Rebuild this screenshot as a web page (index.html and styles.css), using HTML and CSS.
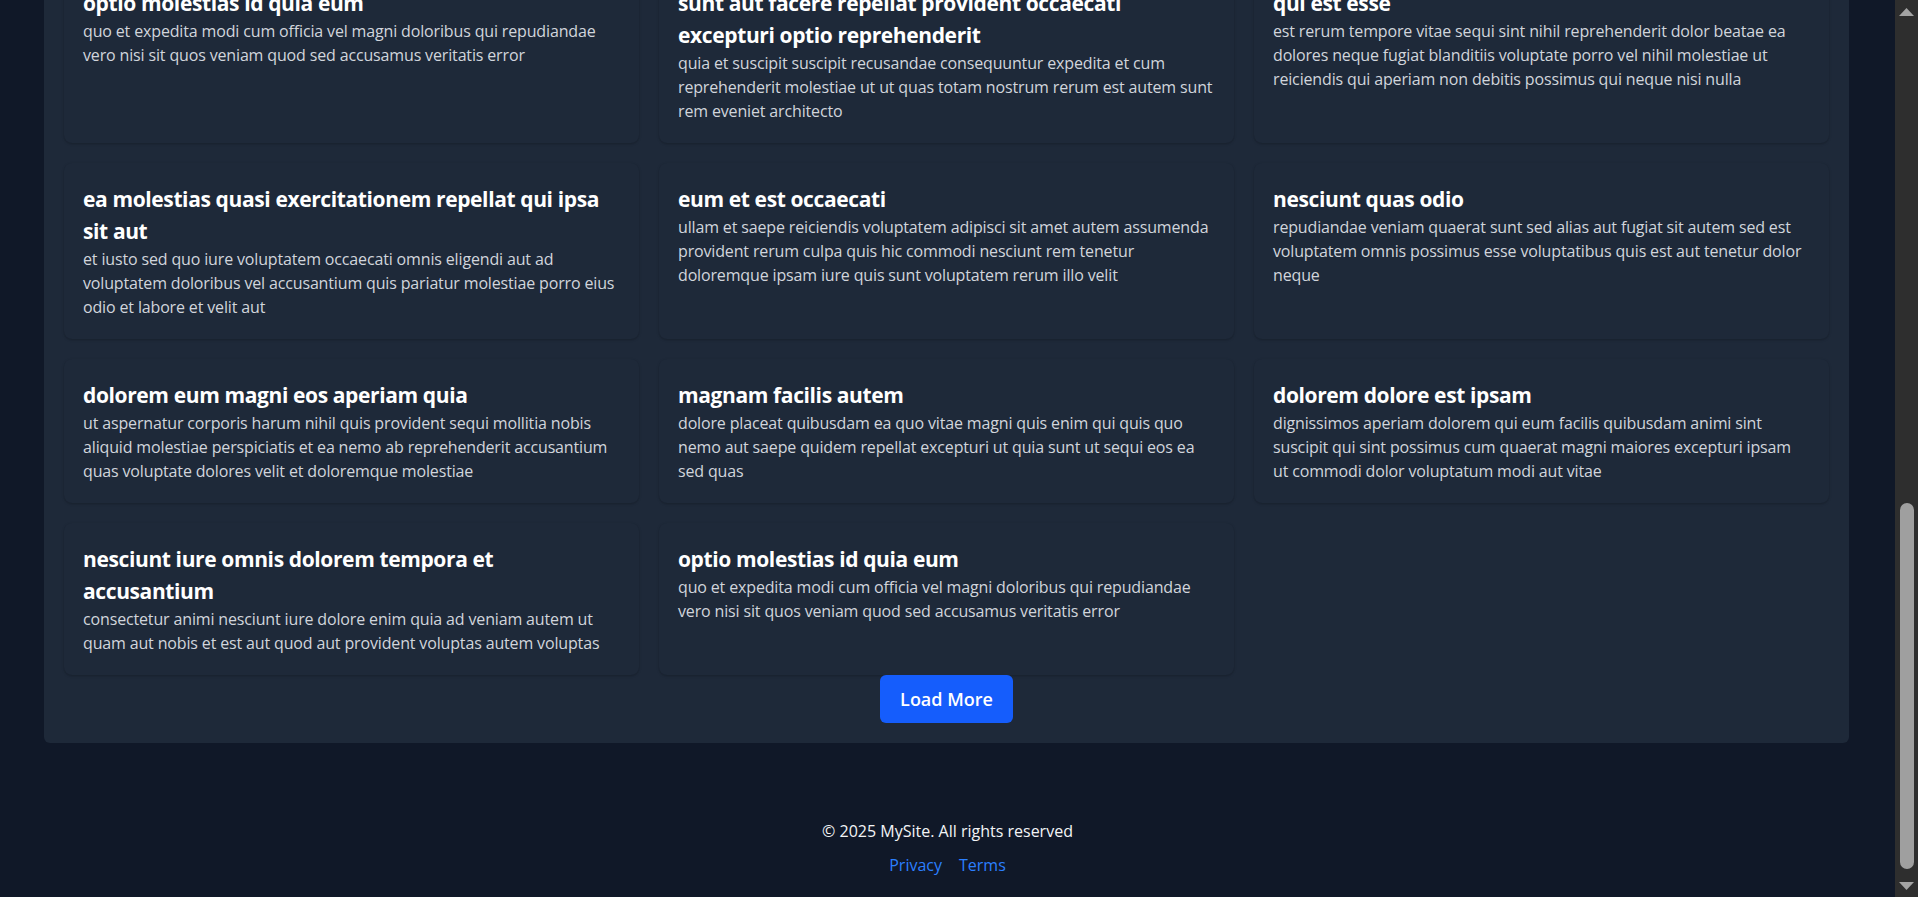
FILE: index.html
```html
<!DOCTYPE html>
<html lang="en">
<head>
<meta charset="utf-8">
<title>MySite</title>
<link rel="stylesheet" href="styles.css">
</head>
<body>
<main class="main">
  <section class="panel">
    <div class="grid">
      <article class="card"><h2 class="card-title">sunt aut facere repellat provident occaecati excepturi optio reprehenderit</h2><p class="card-body">quia et suscipit suscipit recusandae consequuntur expedita et cum reprehenderit molestiae ut ut quas totam nostrum rerum est autem sunt rem eveniet architecto</p></article>
      <article class="card"><h2 class="card-title">qui est esse</h2><p class="card-body">est rerum tempore vitae sequi sint nihil reprehenderit dolor beatae ea dolores neque fugiat blanditiis voluptate porro vel nihil molestiae ut reiciendis qui aperiam non debitis possimus qui neque nisi nulla</p></article>
      <article class="card"><h2 class="card-title">ea molestias quasi exercitationem repellat qui ipsa sit aut</h2><p class="card-body">et iusto sed quo iure voluptatem occaecati omnis eligendi aut ad voluptatem doloribus vel accusantium quis pariatur molestiae porro eius odio et labore et velit aut</p></article>
      <article class="card"><h2 class="card-title">eum et est occaecati</h2><p class="card-body">ullam et saepe reiciendis voluptatem adipisci sit amet autem assumenda provident rerum culpa quis hic commodi nesciunt rem tenetur doloremque ipsam iure quis sunt voluptatem rerum illo velit</p></article>
      <article class="card"><h2 class="card-title">nesciunt quas odio</h2><p class="card-body">repudiandae veniam quaerat sunt sed alias aut fugiat sit autem sed est voluptatem omnis possimus esse voluptatibus quis est aut tenetur dolor neque</p></article>
      <article class="card"><h2 class="card-title">dolorem eum magni eos aperiam quia</h2><p class="card-body">ut aspernatur corporis harum nihil quis provident sequi mollitia nobis aliquid molestiae perspiciatis et ea nemo ab reprehenderit accusantium quas voluptate dolores velit et doloremque molestiae</p></article>
      <article class="card"><h2 class="card-title">magnam facilis autem</h2><p class="card-body">dolore placeat quibusdam ea quo vitae magni quis enim qui quis quo nemo aut saepe quidem repellat excepturi ut quia sunt ut sequi eos ea sed quas</p></article>
      <article class="card"><h2 class="card-title">dolorem dolore est ipsam</h2><p class="card-body">dignissimos aperiam dolorem qui eum facilis quibusdam animi sint suscipit qui sint possimus cum quaerat magni maiores excepturi ipsam ut commodi dolor voluptatum modi aut vitae</p></article>
      <article class="card"><h2 class="card-title">nesciunt iure omnis dolorem tempora et accusantium</h2><p class="card-body">consectetur animi nesciunt iure dolore enim quia ad veniam autem ut quam aut nobis et est aut quod aut provident voluptas autem voluptas</p></article>
      <article class="card"><h2 class="card-title">optio molestias id quia eum</h2><p class="card-body">quo et expedita modi cum officia vel magni doloribus qui repudiandae vero nisi sit quos veniam quod sed accusamus veritatis error</p></article>
      <article class="card"><h2 class="card-title">sunt aut facere repellat provident occaecati excepturi optio reprehenderit</h2><p class="card-body">quia et suscipit suscipit recusandae consequuntur expedita et cum reprehenderit molestiae ut ut quas totam nostrum rerum est autem sunt rem eveniet architecto</p></article>
      <article class="card"><h2 class="card-title">qui est esse</h2><p class="card-body">est rerum tempore vitae sequi sint nihil reprehenderit dolor beatae ea dolores neque fugiat blanditiis voluptate porro vel nihil molestiae ut reiciendis qui aperiam non debitis possimus qui neque nisi nulla</p></article>
      <article class="card"><h2 class="card-title">ea molestias quasi exercitationem repellat qui ipsa sit aut</h2><p class="card-body">et iusto sed quo iure voluptatem occaecati omnis eligendi aut ad voluptatem doloribus vel accusantium quis pariatur molestiae porro eius odio et labore et velit aut</p></article>
      <article class="card"><h2 class="card-title">eum et est occaecati</h2><p class="card-body">ullam et saepe reiciendis voluptatem adipisci sit amet autem assumenda provident rerum culpa quis hic commodi nesciunt rem tenetur doloremque ipsam iure quis sunt voluptatem rerum illo velit</p></article>
      <article class="card"><h2 class="card-title">nesciunt quas odio</h2><p class="card-body">repudiandae veniam quaerat sunt sed alias aut fugiat sit autem sed est voluptatem omnis possimus esse voluptatibus quis est aut tenetur dolor neque</p></article>
      <article class="card"><h2 class="card-title">dolorem eum magni eos aperiam quia</h2><p class="card-body">ut aspernatur corporis harum nihil quis provident sequi mollitia nobis aliquid molestiae perspiciatis et ea nemo ab reprehenderit accusantium quas voluptate dolores velit et doloremque molestiae</p></article>
      <article class="card"><h2 class="card-title">magnam facilis autem</h2><p class="card-body">dolore placeat quibusdam ea quo vitae magni quis enim qui quis quo nemo aut saepe quidem repellat excepturi ut quia sunt ut sequi eos ea sed quas</p></article>
      <article class="card"><h2 class="card-title">dolorem dolore est ipsam</h2><p class="card-body">dignissimos aperiam dolorem qui eum facilis quibusdam animi sint suscipit qui sint possimus cum quaerat magni maiores excepturi ipsam ut commodi dolor voluptatum modi aut vitae</p></article>
      <article class="card"><h2 class="card-title">nesciunt iure omnis dolorem tempora et accusantium</h2><p class="card-body">consectetur animi nesciunt iure dolore enim quia ad veniam autem ut quam aut nobis et est aut quod aut provident voluptas autem voluptas</p></article>
      <article class="card"><h2 class="card-title">optio molestias id quia eum</h2><p class="card-body">quo et expedita modi cum officia vel magni doloribus qui repudiandae vero nisi sit quos veniam quod sed accusamus veritatis error</p></article>
    </div>
    <div class="actions">
      <button class="btn" type="button">Load More</button>
    </div>
  </section>
</main>
<footer class="footer">
  <p class="copy">© 2025 MySite. All rights reserved</p>
  <nav class="links">
    <a href="#privacy">Privacy</a>
    <a href="#terms">Terms</a>
  </nav>
</footer>
<div class="scrollbar" aria-hidden="true">
  <div class="sb-btn"><svg width="15" height="8" viewBox="0 0 15 8"><path d="M7.5 0 L15 8 L0 8 Z" fill="#a3a3a3"/></svg></div>
  <div class="sb-track"><div class="sb-thumb"></div></div>
  <div class="sb-btn"><svg width="15" height="8" viewBox="0 0 15 8"><path d="M0 0 L15 0 L7.5 8 Z" fill="#a3a3a3"/></svg></div>
</div>
<script src="app.js"></script>
</body>
</html>
```
FILE: styles.css
```css
html {
  background: #101828;
}
body {
  margin: 0;
  padding-right: 23px;
  font-family: "Open Sans", "Noto Sans", sans-serif;
  color: #f3f4f6;
}
.main {
  padding: 24px 46px 0 44px;
}
.panel {
  background: #1e2939;
  border-radius: 6px;
  padding: 20px;
}
.grid {
  display: grid;
  grid-template-columns: repeat(3, 1fr);
  gap: 20px;
}
.card {
  background: #1e2939;
  border-radius: 8px;
  padding: 20px 19px;
  box-shadow: 0 1px 3px rgba(0, 0, 0, 0.16), 0 1px 2px -1px rgba(0, 0, 0, 0.16);
}
.card-title {
  margin: 0;
  font-size: 21px;
  line-height: 32px;
  font-weight: 700;
  letter-spacing: -0.38px;
  color: #ffffff;
}
.card-body {
  margin: 0;
  font-size: 16px;
  line-height: 24px;
  letter-spacing: -0.15px;
  color: #d1d5dc;
}
.actions {
  display: flex;
  justify-content: center;
}
.btn {
  background: #155dfc;
  color: #ffffff;
  border: 0;
  border-radius: 6px;
  padding: 10px 20px;
  font-family: "Open Sans", "Noto Sans", sans-serif;
  font-size: 18px;
  line-height: 28px;
  font-weight: 600;
  cursor: pointer;
}
.footer {
  padding: 76px 0 20px;
  text-align: center;
  font-size: 16px;
  line-height: 24px;
}
.copy {
  margin: 0;
  color: #f3f4f6;
}
.links {
  margin-top: 10px;
  display: flex;
  justify-content: center;
  gap: 17px;
}
.links a {
  color: #2b7fff;
  text-decoration: none;
}
.scrollbar {
  position: fixed;
  top: 0;
  right: 0;
  width: 23px;
  height: 100vh;
  background: #2e2e2e;
  display: flex;
  flex-direction: column;
}
.sb-btn {
  height: 23px;
  display: flex;
  align-items: center;
  justify-content: center;
  flex: none;
}
.sb-btn svg {
  display: block;
}
.sb-track {
  flex: 1;
  display: flex;
  flex-direction: column;
  justify-content: flex-end;
  padding: 0 4px 5px 5px;
}
.sb-thumb {
  height: 366px;
  background: #9f9f9f;
  border-radius: 7px;
}
```
FILE: app.js
```js
function scrollToEnd() {
  window.scrollTo(0, document.documentElement.scrollHeight);
}
scrollToEnd();
window.addEventListener('load', scrollToEnd);
```
